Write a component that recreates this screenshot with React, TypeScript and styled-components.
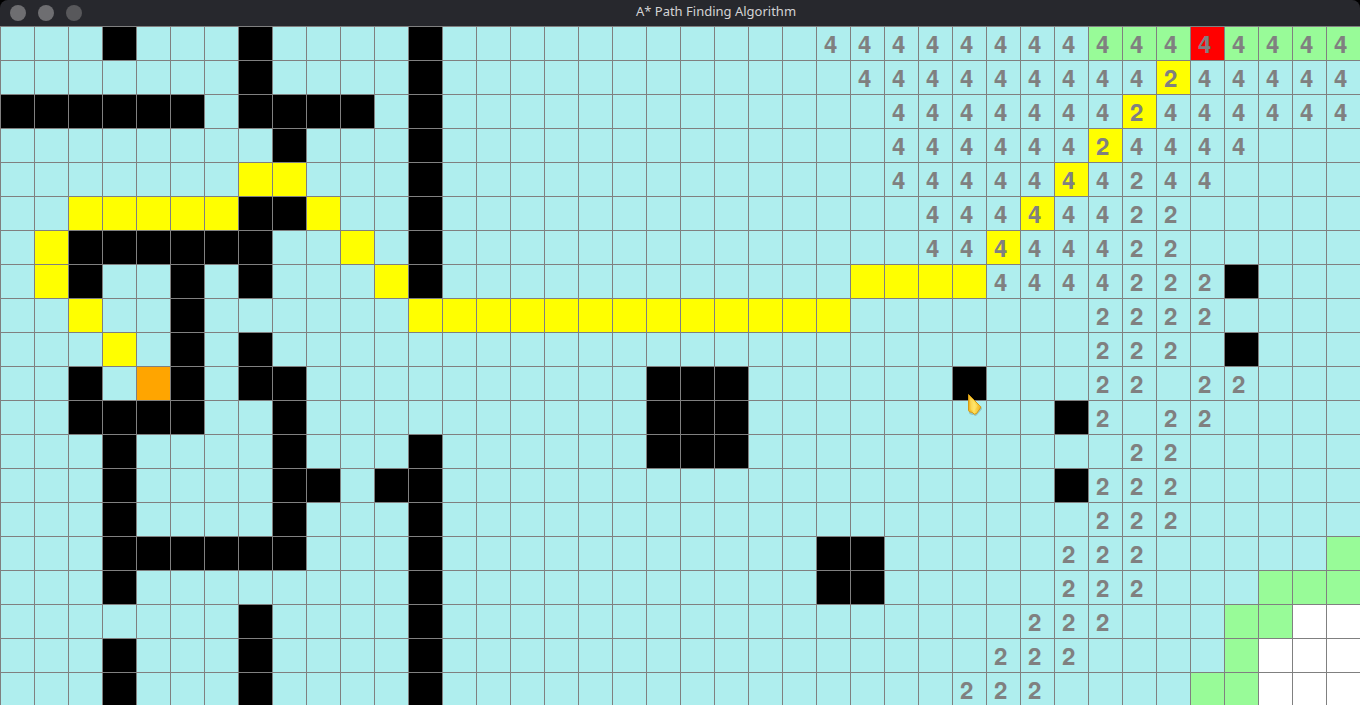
import React from 'react';
import styled, { createGlobalStyle } from 'styled-components';

type Kind = 'closed' | 'wall' | 'path' | 'open' | 'start' | 'end' | 'blank';
type Range = [from: number, to: number];

const COLUMNS = 40;
const ROWS = 20;

const fills: Record<Kind, string> = {
  closed: '#afeeee',
  wall: '#000000',
  path: '#ffff00',
  open: '#98fb98',
  start: '#ffa500',
  end: '#ff0000',
  blank: '#ffffff',
};

const one = (n: number): Range => [n, n];

const walls: Range[][] = [
  [one(3), one(7), one(12)],
  [one(7), one(12)],
  [[0, 5], [7, 10], one(12)],
  [one(8), one(12)],
  [one(12)],
  [[7, 8], one(12)],
  [[2, 7], one(12)],
  [one(2), one(5), one(7), one(12), one(36)],
  [one(5)],
  [one(5), one(7), one(36)],
  [one(2), one(5), [7, 8], [19, 21], one(28)],
  [[2, 5], one(8), [19, 21], one(31)],
  [one(3), one(8), one(12), [19, 21]],
  [one(3), [8, 9], [11, 12], one(31)],
  [one(3), one(8), one(12)],
  [[3, 8], one(12), [24, 25]],
  [one(3), one(12), [24, 25]],
  [one(7), one(12)],
  [one(3), one(7), one(12)],
  [one(3), one(7), one(12)],
];

const path: Range[][] = [
  [],
  [one(34)],
  [one(33)],
  [one(32)],
  [[7, 8], one(31)],
  [[2, 6], one(9), one(30)],
  [one(1), one(10), one(29)],
  [one(1), one(11), [25, 28]],
  [one(2), [12, 24]],
  [one(3)],
];

const open: Record<number, Range[]> = {
  0: [[32, 34], [36, 39]],
  15: [one(39)],
  16: [[37, 39]],
  17: [[36, 37]],
  18: [one(36)],
  19: [[35, 36]],
};

const blank: Record<number, Range[]> = {
  17: [[38, 39]],
  18: [[37, 39]],
  19: [[37, 39]],
};

const fours: Range[][] = [
  [[24, 39]],
  [[25, 33], [35, 39]],
  [[26, 32], [34, 39]],
  [[26, 31], [33, 36]],
  [[26, 32], [34, 35]],
  [[27, 32]],
  [[27, 32]],
  [[29, 32]],
];

const twos: Range[][] = [
  [],
  [one(34)],
  [one(33)],
  [one(32)],
  [one(33)],
  [[33, 34]],
  [[33, 34]],
  [[33, 35]],
  [[32, 35]],
  [[32, 34]],
  [[32, 33], [35, 36]],
  [one(32), [34, 35]],
  [[33, 34]],
  [[32, 34]],
  [[32, 34]],
  [[31, 33]],
  [[31, 33]],
  [[30, 32]],
  [[29, 31]],
  [[28, 30]],
];

const has = (ranges: Range[] | undefined, column: number) =>
  (ranges ?? []).some(([from, to]) => column >= from && column <= to);

const kindAt = (row: number, column: number): Kind => {
  if (row === 10 && column === 4) return 'start';
  if (row === 0 && column === 35) return 'end';
  if (has(walls[row], column)) return 'wall';
  if (has(path[row], column)) return 'path';
  if (has(open[row], column)) return 'open';
  if (has(blank[row], column)) return 'blank';
  return 'closed';
};

const labelAt = (row: number, column: number) => {
  if (has(fours[row], column)) return '4';
  if (has(twos[row], column)) return '2';
  return '';
};

const GlobalStyle = createGlobalStyle`
  * { box-sizing: border-box; }
  body { margin: 0; background: #000; }
`;

const Window = styled.main`
  position: relative;
  height: 100vh;
  overflow: hidden;
`;

const TitleBar = styled.header`
  display: flex;
  align-items: center;
  height: 26px;
  padding: 0 10px;
  background: #27282d;
  border-radius: 8px 8px 0 0;
`;

const WindowButtons = styled.div`
  display: flex;
  gap: 12px;
`;

const WindowButton = styled.button<{ $dim?: boolean }>`
  width: 16px;
  height: 16px;
  padding: 0;
  border: 0;
  border-radius: 50%;
  background: ${({ $dim }) => ($dim ? '#58585b' : '#6e6e71')};
`;

const Title = styled.h1`
  flex: 1;
  margin: 0;
  padding-bottom: 4px;
  color: #d3d3d4;
  font: 400 13px/20px 'Noto Sans', sans-serif;
  text-align: center;
`;

const Board = styled.section`
  display: grid;
  grid-template-columns: repeat(${COLUMNS}, minmax(0, 1fr));
  grid-auto-rows: 34px;
`;

const Cell = styled.div<{ $kind: Kind }>`
  padding: 5px 0 0 7px;
  border: solid #808080;
  border-width: 1px 0 0 1px;
  background: ${({ $kind }) => fills[$kind]};
  color: #808080;
  font: 700 24px/28px FreeSans, 'Liberation Sans', Arial, sans-serif;
`;

const Pointer = styled.svg`
  position: absolute;
  top: 393px;
  left: 966px;
  width: 18px;
  height: 25px;
`;

export default function App() {
  return (
    <Window>
      <GlobalStyle />
      <TitleBar>
        <WindowButtons>
          <WindowButton aria-label="Close" />
          <WindowButton aria-label="Minimize" />
          <WindowButton aria-label="Maximize" $dim />
        </WindowButtons>
        <Title>A* Path Finding Algorithm</Title>
      </TitleBar>
      <Board aria-label="Path finding grid">
        {Array.from({ length: ROWS * COLUMNS }, (_, index) => {
          const row = Math.floor(index / COLUMNS);
          const column = index % COLUMNS;
          return (
            <Cell key={index} $kind={kindAt(row, column)}>
              {labelAt(row, column)}
            </Cell>
          );
        })}
      </Board>
      <Pointer viewBox="0 0 18 25" aria-hidden="true">
        <defs>
          <linearGradient id="gold" x1="0" y1="0" x2="1" y2="0">
            <stop offset="0" stopColor="#f0b018" />
            <stop offset="0.45" stopColor="#ffe25a" />
            <stop offset="1" stopColor="#f0b020" />
          </linearGradient>
        </defs>
        <path d="M3 3 L3 20 Q4 22 8 22 Q9 24 11 22 L16 16 Q16 14 14 13 Z" fill="#4d6b6b" opacity="0.3" />
        <path
          d="M2.5 1.5 L2.5 17.5 Q3 19.5 6 19.3 Q8.5 22.5 10.5 20.5 L14.5 15 Q15.5 13.5 13.5 12.5 Z"
          fill="url(#gold)"
          stroke="#d39a12"
          strokeWidth="1"
          strokeLinejoin="round"
        />
        <path d="M4 5 L4.5 16.5 L8 18 L11.5 13 Z" fill="#ffea85" opacity="0.4" />
      </Pointer>
    </Window>
  );
}
